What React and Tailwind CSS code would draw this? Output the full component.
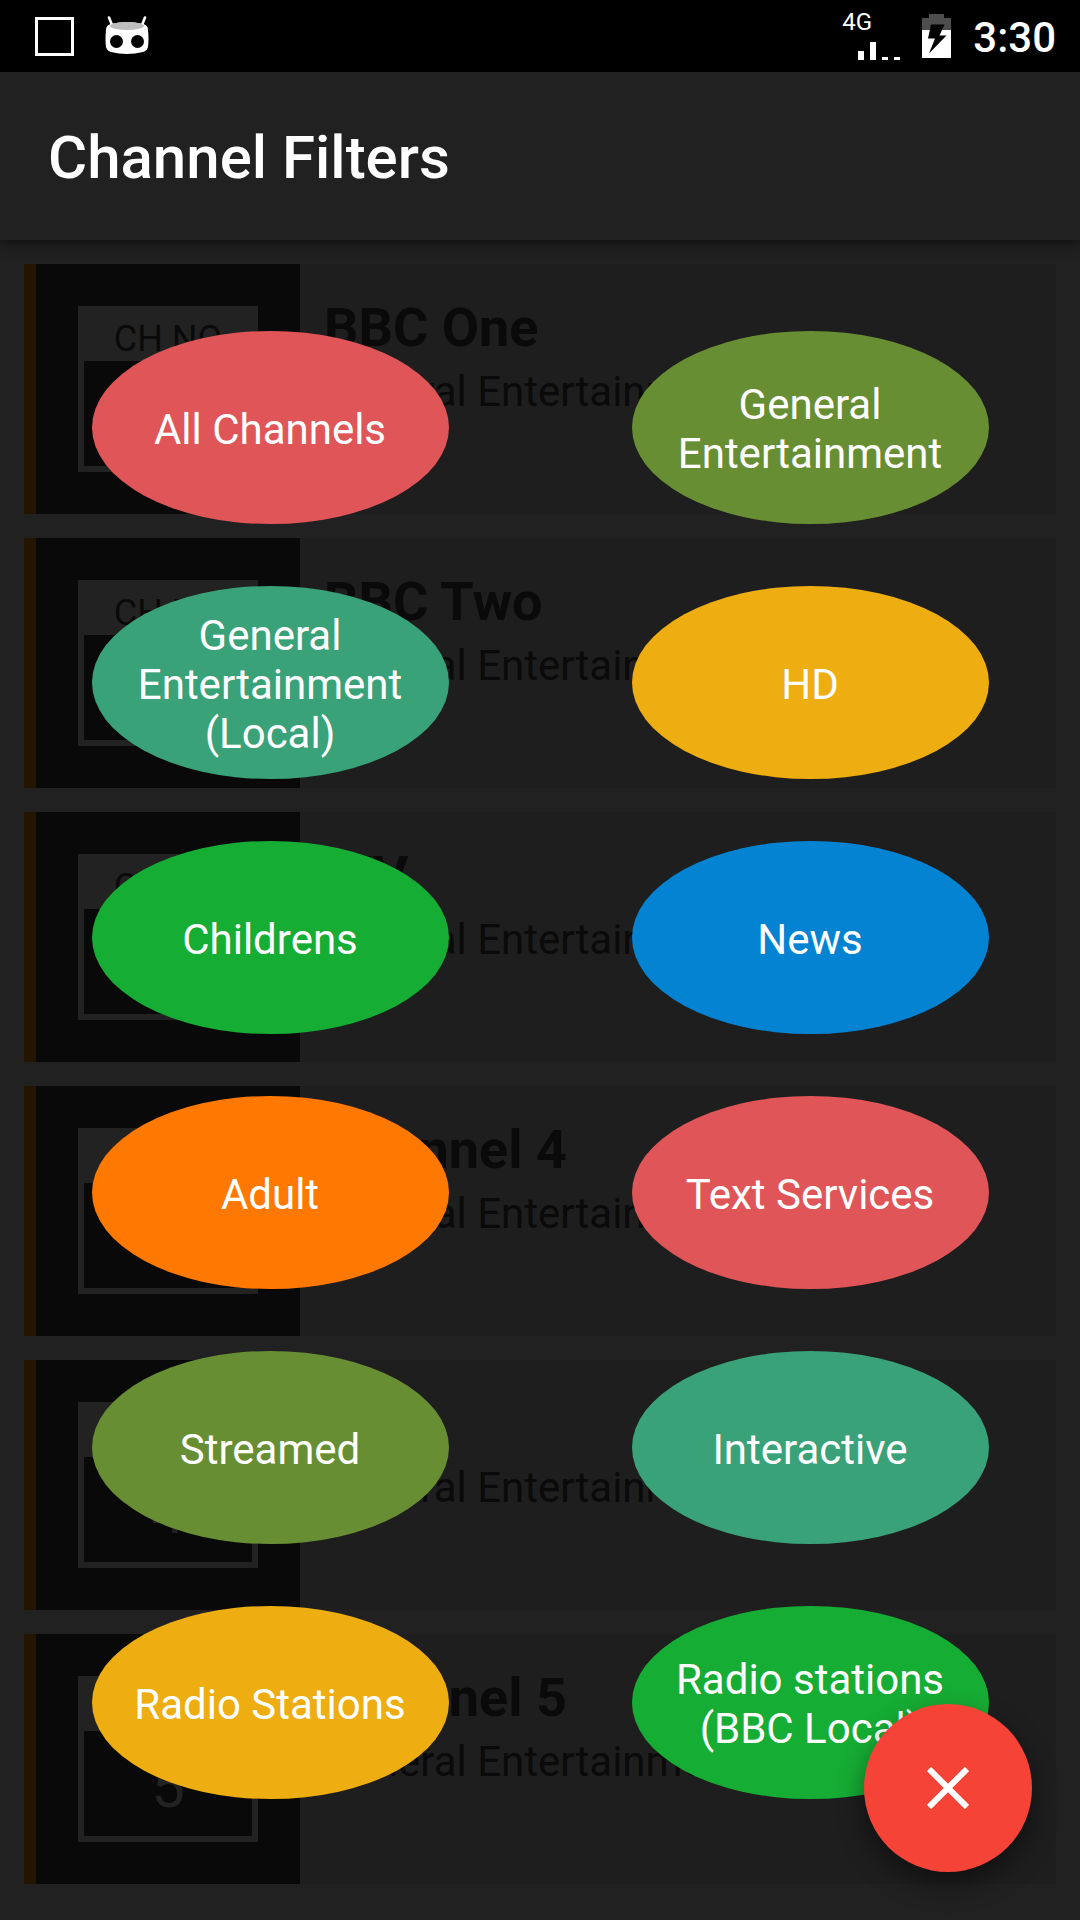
import { useState } from "react";

const channels = [
    { id: 1, number: "1", name: "BBC One", genre: "General Entertainment" },
    { id: 2, number: "2", name: "BBC Two", genre: "General Entertainment" },
    { id: 3, number: "3", name: "ITV", genre: "General Entertainment" },
    { id: 4, number: "4", name: "Channel 4", genre: "General Entertainment" },
    { id: 5, number: "4", name: "S4C", genre: "General Entertainment" },
    { id: 6, number: "5", name: "Channel 5", genre: "General Entertainment" },
];

const filters = [
    { label: "All Channels", color: "bg-[#df5558]" },
    { label: "General Entertainment", color: "bg-[#688e34]" },
    { label: "General Entertainment (Local)", color: "bg-[#3aa278]" },
    { label: "HD", color: "bg-[#eead10]" },
    { label: "Childrens", color: "bg-[#16ad34]" },
    { label: "News", color: "bg-[#0583d3]" },
    { label: "Adult", color: "bg-[#ff7800]" },
    { label: "Text Services", color: "bg-[#df5558]" },
    { label: "Streamed", color: "bg-[#688e34]" },
    { label: "Interactive", color: "bg-[#3aa278]" },
    { label: "Radio Stations", color: "bg-[#eead10]" },
    { label: "Radio stations (BBC Local)", color: "bg-[#16ad34]" },
];

function CidIcon() {
    return (
        <svg width="44" height="40" viewBox="0 0 44 40" aria-hidden="true">
            <path d="M4 1.5 L7 9 M40 1.5 L37 9" stroke="#fff" strokeWidth="2.6" strokeLinecap="round" />
            <path d="M1 14 Q1 9 6 8 Q22 4 38 8 Q43 9 43 14 Q44 24 43 31 Q42 35 38 36 Q22 40 6 36 Q2 35 1 31 Q0 24 1 14 Z" fill="#fff" />
            <ellipse cx="22" cy="10" rx="17" ry="4" fill="#bdbdbd" />
            <circle cx="11.5" cy="25.5" r="6.5" />
            <circle cx="32.5" cy="25.5" r="6.5" />
        </svg>
    )
}

function SignalIcon() {
    return (
        <svg width="42" height="18" viewBox="0 0 42 18" fill="#fff" aria-hidden="true">
            <rect x="0" y="9" width="6" height="9" />
            <rect x="12" y="0" width="6" height="18" />
            <rect x="24" y="15" width="6" height="3" />
            <rect x="36" y="15" width="6" height="3" />
        </svg>
    )
}

function BatteryIcon() {
    return (
        <svg width="29" height="44" viewBox="0 0 29 44" aria-hidden="true">
            <path d="M7 0 H22 V4 H29 V16 H0 V4 H7 Z" fill="#4d4d4d" />
            <rect x="0" y="16" width="29" height="28" fill="#fff" />
            <path d="M9 10.5 H22.5 L17.5 21.5 H24.5 L7 39.5 L13 24.5 H6 Z" />
        </svg>
    )
}

function StatusBar() {
    return (
        <div className="flex h-18 items-center justify-between bg-black pl-[35px] pr-6 text-white">
            <div className="flex items-center gap-[31px]">
                <div className="size-[39px] border-3 border-white"></div>
                <CidIcon />
            </div>
            <div className="flex items-center gap-[22px]">
                <div className="flex flex-col pb-1">
                    <span className="text-[24px] leading-[28px]">4G</span>
                    <div className="pl-4 pt-1.5">
                        <SignalIcon />
                    </div>
                </div>
                <BatteryIcon />
                <span className="pt-1 text-[42px] font-medium leading-[48px]">3:30</span>
            </div>
        </div>
    )
}

function ChannelCard({ channel }) {
    return (
        <li className="flex h-[250px] border-l-12 border-[#231500] bg-[#1e1e1e] text-[#0a0a0a]">
            <div className="flex w-[264px] shrink-0 items-start bg-[#090909] pl-[42px] pt-[42px]">
                <div className="w-[180px] bg-[#222222] px-1.5 pb-1.5 text-center">
                    <p className="pt-3 text-[36px] leading-[43px]">CH NO</p>
                    <p className="h-[105px] bg-[#090909] pt-5 text-[60px] leading-[72px] text-[#222222]">{channel.number}</p>
                </div>
            </div>
            <div className="min-w-0 pl-6 pt-8">
                <h2 className="text-[54px] font-bold leading-[63px]">{channel.name}</h2>
                <p className="mt-2 text-[42px] leading-[49px]">{channel.genre}</p>
            </div>
        </li>
    )
}

export default function App() {
    const [isOpen, setIsOpen] = useState(true);

    return (
        <div className="flex min-h-screen flex-col bg-[#212121] font-['Roboto',sans-serif]">
            <StatusBar />
            <header className="relative z-10 flex h-42 items-center bg-[#212121] px-12 pt-1 shadow-[0_4px_12px_rgba(0,0,0,0.5)]">
                <h1 className="text-[60px] font-medium leading-[70px] text-white">Channel Filters</h1>
            </header>

            <main className="relative flex-1">
                <ul className="flex flex-col gap-6 p-6">
                    {channels.map((channel) => (
                        <ChannelCard key={channel.id} channel={channel} />
                    ))}
                </ul>

                {isOpen && (
                    <div className="absolute inset-x-0 top-0 grid grid-cols-2 justify-items-center gap-y-[62px] pt-[91px]">
                        {filters.map((filter) => (
                            <button
                                key={filter.label}
                                type="button"
                                className={`${filter.color} flex h-[193px] w-[357px] items-center justify-center rounded-[50%] px-8 pt-[3px] text-center text-[42px] leading-[49px] text-white`}
                            >
                                {filter.label}
                            </button>
                        ))}
                    </div>
                )}
            </main>

            <button
                type="button"
                aria-label={isOpen ? "Close filters" : "Open filters"}
                onClick={() => setIsOpen(!isOpen)}
                className="fixed bottom-12 right-12 z-20 flex size-42 items-center justify-center rounded-full bg-[#f54337] shadow-[0_12px_28px_rgba(0,0,0,0.45)]"
            >
                <svg width="42" height="42" viewBox="0 0 42 42" stroke="#fff" strokeWidth="6" aria-hidden="true">
                    {isOpen ? <path d="M2 2 L40 40 M40 2 L2 40" /> : <path d="M21 0 V42 M0 21 H42" />}
                </svg>
            </button>
        </div>
    )
}
